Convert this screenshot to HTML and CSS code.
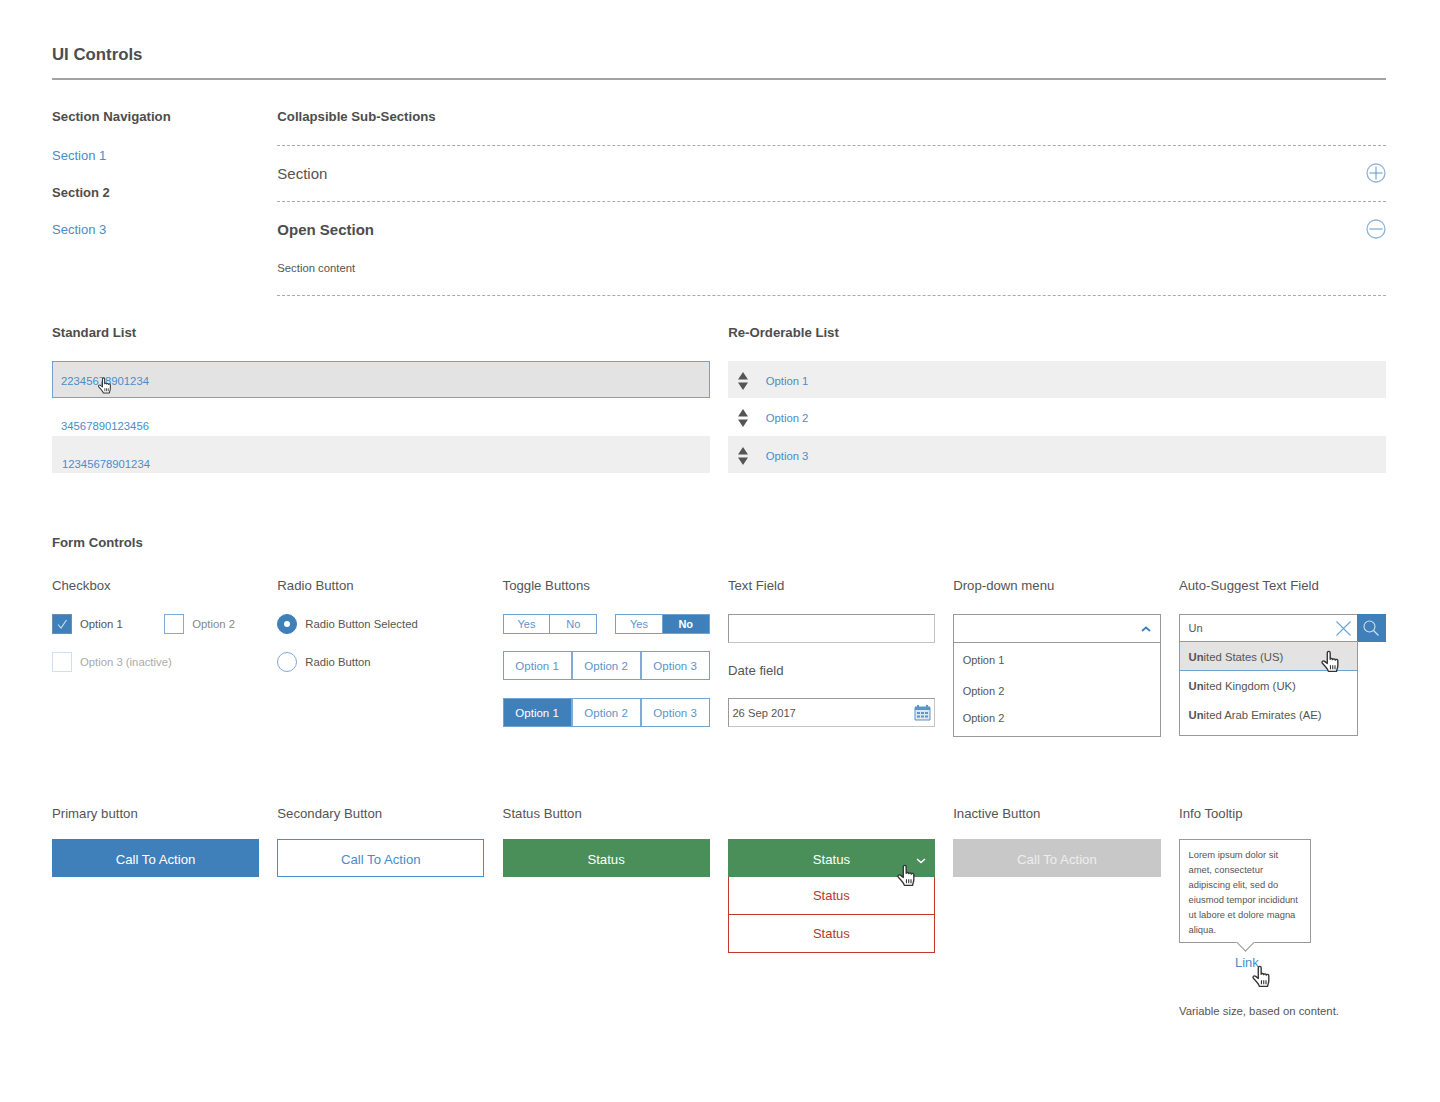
FILE: index.html
```html
<!DOCTYPE html>
<html>
<head>
	<meta charset="utf-8">
	<title>UI Controls</title>
	<link rel="stylesheet" href="styles.css">
</head>
<body>
	<svg class="defs" width="0" height="0">
		<symbol id="hand" viewBox="0 0 22 25">
			<path d="M8 3a1.6 1.6 0 0 1 3.2 0v7a1.5 1.5 0 0 1 2.8.4 1.5 1.5 0 0 1 2.8.5 1.5 1.5 0 0 1 2.8.9V17c0 2.4-1 3.6-1.4 6.4H9.2C8.4 20.6 5.4 17.4 2.8 14.8 1.2 13 3 10.800 5.2 12.400L8 14.600Z" fill="#fff" stroke="#333" stroke-width="1.5" stroke-linejoin="round"/>
			<path d="M11.5 16.500v4.500M14 16.500v4.500M16.500 16.500v4.500" fill="none" stroke="#333" stroke-width="1.2"/>
		</symbol>
	</svg>

	<div class="main">
		<h1>UI Controls</h1>

		<div class="grid top-box">
			<div>
				<h4>Section Navigation</h4>
				<ul class="nav-list">
					<li><a>Section 1</a></li>
					<li class="current">Section 2</li>
					<li><a>Section 3</a></li>
				</ul>
			</div>
			<div class="span-5">
				<h4 class="sub-title">Collapsible Sub-Sections</h4>
				<div class="sub-section">
					<div class="sub-head">
						<span>Section</span>
						<svg width="20" height="20" viewBox="0 0 20 20"><circle cx="10" cy="10" r="9" fill="none" stroke="#8db4d9" stroke-width="1.3"/><path d="M10 3.500v13M3.500 10h13" stroke="#5b95cb" stroke-width="1"/></svg>
					</div>
				</div>
				<div class="sub-section">
					<div class="sub-head open">
						<span>Open Section</span>
						<svg width="20" height="20" viewBox="0 0 20 20"><circle cx="10" cy="10" r="9" fill="none" stroke="#8db4d9" stroke-width="1.3"/><path d="M3.500 10h13" stroke="#5b95cb" stroke-width="1"/></svg>
					</div>
					<p class="sub-content">Section content</p>
				</div>
			</div>
		</div>

		<div class="list-wrap">
			<div>
				<h4 class="list-title">Standard List</h4>
				<div class="std-list">
					<div class="std-row selected">
						<a>22345678901234</a>
						<svg class="hand hand-list"><use href="#hand"/></svg>
					</div>
					<div class="std-row middle"><a>34567890123456</a></div>
					<div class="std-row grey last"><a class="nudge">12345678901234</a></div>
				</div>
			</div>
			<div>
				<h4 class="list-title">Re-Orderable List</h4>
				<div class="re-list">
					<div class="re-row grey">
						<svg width="10" height="18" viewBox="0 0 10 18"><path d="M5 0l5 7.500H0zM0 10.500h10L5 18z" fill="#555"/></svg>
						<a>Option 1</a>
					</div>
					<div class="re-row middle">
						<svg width="10" height="18" viewBox="0 0 10 18"><path d="M5 0l5 7.500H0zM0 10.500h10L5 18z" fill="#555"/></svg>
						<a>Option 2</a>
					</div>
					<div class="re-row grey">
						<svg width="10" height="18" viewBox="0 0 10 18"><path d="M5 0l5 7.500H0zM0 10.500h10L5 18z" fill="#555"/></svg>
						<a>Option 3</a>
					</div>
				</div>
			</div>
		</div>

		<h4 class="form-title">Form Controls</h4>

		<div class="grid">
			<div>
				<div class="field-label">Checkbox</div>
				<div class="check-row">
					<span class="check on"><svg width="18" height="18" viewBox="0 0 18 18"><path d="M5 9.500l3 3.500 5.500-8" fill="none" stroke="#cfe0f0" stroke-width="1.1"/></svg></span>
					<span class="check-text">Option 1</span>
					<span class="check second"></span>
					<span class="check-text light">Option 2</span>
				</div>
				<div class="check-row">
					<span class="check off"></span>
					<span class="check-text lighter">Option 3 (inactive)</span>
				</div>
			</div>
			<div>
				<div class="field-label">Radio Button</div>
				<div class="check-row">
					<span class="radio on"></span>
					<span class="check-text">Radio Button Selected</span>
				</div>
				<div class="check-row">
					<span class="radio"></span>
					<span class="check-text">Radio Button</span>
				</div>
			</div>
			<div>
				<div class="field-label">Toggle Buttons</div>
				<div class="toggle-small">
					<div class="toggle">
						<span>Yes</span><span>No</span>
					</div>
					<div class="toggle">
						<span>Yes</span><span class="active">No</span>
					</div>
				</div>
				<div class="toggle big">
					<span>Option 1</span><span>Option 2</span><span>Option 3</span>
				</div>
				<div class="toggle big">
					<span class="active">Option 1</span><span>Option 2</span><span>Option 3</span>
				</div>
			</div>
			<div>
				<div class="field-label">Text Field</div>
				<div class="text-field"></div>
				<div class="field-label date-label">Date field</div>
				<div class="text-field date">
					<span>26 Sep 2017</span>
					<svg width="17" height="17" viewBox="0 0 17 17">
						<path d="M1 3.500h15V16H1z" fill="#dbe8f4" stroke="#5b95cb"/>
						<path d="M1 2.500h15V6H1z" fill="#5b95cb"/>
						<path d="M4 1v3M13 1v3" stroke="#5b95cb" stroke-width="2"/>
						<path d="M3 8h3v2H3zM7 8h3v2H7zM11 8h3v2h-3zM3 11.500h3v2H3zM7 11.500h3v2H7zM11 11.500h3v2h-3z" fill="#5b95cb"/>
					</svg>
				</div>
			</div>
			<div>
				<div class="field-label">Drop-down menu</div>
				<div class="drop-box">
					<div class="drop-head">
						<svg width="10" height="6" viewBox="0 0 10 6"><path d="M1 5l4-3.500L9 5" fill="none" stroke="#3f7fba" stroke-width="1.8"/></svg>
					</div>
					<div class="drop-item first">Option 1</div>
					<div class="drop-item second">Option 2</div>
					<div class="drop-item third">Option 2</div>
				</div>
			</div>
			<div>
				<div class="field-label">Auto-Suggest Text Field</div>
				<div class="suggest-head">
					<div class="suggest-input">
						<span>Un</span>
						<svg width="17" height="17" viewBox="0 0 17 17"><path d="M1.500 1.500l14 14M15.500 1.500l-14 14" stroke="#6ea3d2" stroke-width="1.1"/></svg>
					</div>
					<div class="suggest-btn">
						<svg width="18" height="18" viewBox="0 0 18 18"><circle cx="7.500" cy="7.500" r="5.500" fill="none" stroke="#cfe0f0" stroke-width="1.1"/><path d="M11.500 11.500l5 5" stroke="#cfe0f0" stroke-width="1.2"/></svg>
					</div>
				</div>
				<div class="suggest-list">
					<div class="suggest-item selected"><b>Un</b>ited States (US)
						<svg class="hand hand-suggest"><use href="#hand"/></svg>
					</div>
					<div class="suggest-item"><b>Un</b>ited Kingdom (UK)</div>
					<div class="suggest-item"><b>Un</b>ited Arab Emirates (AE)</div>
				</div>
			</div>
		</div>

		<div class="grid button-box">
			<div>
				<div class="field-label">Primary button</div>
				<div class="btn primary">Call To Action</div>
			</div>
			<div>
				<div class="field-label">Secondary Button</div>
				<div class="btn secondary">Call To Action</div>
			</div>
			<div>
				<div class="field-label">Status Button</div>
				<div class="btn status">Status</div>
			</div>
			<div>
				<div class="field-label">&nbsp;</div>
				<div class="btn status split">
					Status
					<svg class="split-arrow" width="10" height="6" viewBox="0 0 10 6"><path d="M1 1l4 3.500L9 1" fill="none" stroke="#fff" stroke-width="1.5"/></svg>
					<svg class="hand hand-status"><use href="#hand"/></svg>
				</div>
				<div class="status-item">Status</div>
				<div class="status-item">Status</div>
			</div>
			<div>
				<div class="field-label">Inactive Button</div>
				<div class="btn inactive">Call To Action</div>
			</div>
			<div>
				<div class="field-label">Info Tooltip</div>
				<div class="tooltip">Lorem ipsum dolor sit amet, consectetur adipiscing elit, sed do eiusmod tempor incididunt ut labore et dolore magna aliqua.</div>
				<div class="tip-link">
					<a>Link</a>
					<svg class="hand hand-link"><use href="#hand"/></svg>
				</div>
				<p class="tip-note">Variable size, based on content.</p>
			</div>
		</div>
	</div>
</body>
</html>
```

FILE: styles.css
```css
* {
	margin: 0;
	padding: 0;
	box-sizing: border-box;
}
body {
	font-family: "Liberation Sans", Arial, sans-serif;
	color: #555;
	background: #fff;
}
a {
	color: #4a8cc9;
}
.defs {
	position: absolute;
}
.main {
	margin-left: 52px;
	width: 1334px;
	height: 1102px;
}
h1 {
	padding-top: 45px;
	height: 80px;
	border-bottom: 2px solid #a3a3a3;
	font-size: 16.8px;
	line-height: 20px;
	color: #4d4d4d;
}
h4 {
	font-size: 13.2px;
	line-height: 20px;
	color: #4d4d4d;
}
.grid {
	display: grid;
	grid-template-columns: 207px 207px 207px 207px 207.5px 207px;
	column-gap: 18.3px;
	align-items: start;
}
.span-5 {
	grid-column: span 5;
}

.top-box {
	margin-top: 27px;
}
.nav-list {
	margin-top: 10px;
	list-style: none;
	font-size: 13px;
}
.nav-list li {
	height: 37px;
	line-height: 37px;
}
.nav-list .current {
	font-weight: bold;
	color: #4d4d4d;
}
.sub-title {
	margin-bottom: 18px;
}
.sub-section {
	border-bottom: 1px dashed #aaa;
}
.sub-section:first-of-type {
	border-top: 1px dashed #aaa;
}
.sub-head {
	display: flex;
	justify-content: space-between;
	align-items: center;
	padding-bottom: 1px;
	height: 55px;
	font-size: 15px;
}
.sub-head.open {
	font-weight: bold;
	color: #4d4d4d;
}
.sub-content {
	padding: 1px 0 17px;
	font-size: 11.3px;
	line-height: 20px;
}

.list-wrap {
	display: grid;
	grid-template-columns: 657.8px 657.8px;
	column-gap: 18.4px;
	margin-top: 27px;
}
.list-title {
	margin-bottom: 18px;
}
.std-row {
	display: flex;
	position: relative;
	align-items: flex-end;
	padding: 0 0 2px 9px;
	height: 37px;
	font-size: 11.3px;
	line-height: 14px;
}
.std-row.middle {
	padding-bottom: 3px;
	height: 38px;
}
.std-row.selected {
	align-items: center;
	padding: 2px 0 0 8px;
	border: 1px solid #6ea3d2;
	background: #e3e3e3;
}
.grey {
	background: #efefef;
}
.nudge {
	margin-left: 1px;
}
.re-row {
	display: flex;
	align-items: center;
	padding: 1px 0 0 10px;
	height: 37px;
	font-size: 11.3px;
}
.re-row.grey {
	padding-top: 2px;
}
.re-row.middle {
	height: 38px;
}
.re-row a {
	margin-left: 17.5px;
}

.form-title {
	margin: 60px 0 23px;
}
.field-label {
	margin-bottom: 18px;
	font-size: 13.2px;
	line-height: 20px;
}
.check-row {
	display: flex;
	align-items: center;
	margin-bottom: 17.5px;
	height: 20px;
	font-size: 11.3px;
}
.check {
	display: block;
	flex: none;
	width: 20px;
	height: 20px;
	border: 1px solid #7fabd6;
}
.check.on {
	border-color: #6b8fb0;
	background: #3f7fba;
}
.check.second {
	margin-left: 41.5px;
}
.check.off {
	border-color: #cfe0f0;
}
.check-text {
	margin-left: 8px;
}
.light {
	color: #888;
}
.lighter {
	color: #aaa;
}
.radio {
	flex: none;
	position: relative;
	width: 20px;
	height: 20px;
	border: 1px solid #7fabd6;
	border-radius: 50%;
}
.radio.on {
	border-color: #3f7fba;
	background: #3f7fba;
}
.radio.on::after {
	content: "";
	position: absolute;
	top: 6px;
	left: 6px;
	width: 6px;
	height: 6px;
	border-radius: 50%;
	background: #fff;
}

.toggle-small {
	display: flex;
	justify-content: space-between;
	margin-bottom: 17px;
}
.toggle-small .toggle {
	width: 94.5px;
}
.toggle {
	display: flex;
	height: 20px;
	border: 1px solid #6ea3d2;
	font-size: 11px;
	line-height: 18px;
	color: #5b95cb;
}
.toggle span {
	flex: 1;
	text-align: center;
	border-left: 1px solid #6ea3d2;
}
.toggle span:first-child {
	border-left: 0;
}
.toggle .active {
	background: #3f7fba;
	color: #fff;
	font-weight: bold;
}
.toggle.big {
	margin-bottom: 18px;
	height: 29px;
	font-size: 11.5px;
	line-height: 29px;
}
.toggle.big span {
	border-left-width: 2px;
	border-left-color: #7fabd6;
}
.toggle.big .active {
	font-weight: normal;
}

.text-field {
	height: 29px;
	border: 1px solid #999;
	border-right-color: #c4c4c4;
	border-bottom-color: #c4c4c4;
}
.date-label {
	margin: 18px 0 17px;
}
.text-field.date {
	display: flex;
	justify-content: space-between;
	align-items: center;
	padding: 0 3px 0 3.5px;
	font-size: 11.2px;
}

.drop-box {
	height: 123px;
	border: 1px solid #999;
	font-size: 11px;
}
.drop-head {
	display: flex;
	justify-content: flex-end;
	align-items: center;
	padding-right: 9px;
	height: 28px;
	border-bottom: 1px solid #999;
}
.drop-item {
	padding-left: 8.5px;
	line-height: 20px;
}
.drop-item.first {
	margin-top: 7px;
}
.drop-item.second {
	margin-top: 11px;
}
.drop-item.third {
	margin-top: 7px;
}

.suggest-head {
	display: flex;
	height: 28px;
}
.suggest-input {
	display: flex;
	justify-content: space-between;
	align-items: center;
	padding: 0 5px 0 8.5px;
	width: 178px;
	border: 1px solid #999;
	border-right: 0;
	font-size: 11px;
}
.suggest-btn {
	display: flex;
	justify-content: center;
	align-items: center;
	width: 29px;
	background: #3f7fba;
}
.suggest-list {
	width: 179px;
	height: 95px;
	border: 1px solid #999;
	border-top: 0;
	font-size: 11.3px;
}
.suggest-item {
	padding-left: 8.5px;
	height: 28.5px;
	line-height: 30px;
}
.suggest-item.selected {
	position: relative;
	margin: -1px -1px 0;
	padding-left: 8.5px;
	height: 30px;
	line-height: 31px;
	border: 1px solid #6ea3d2;
	background: #e3e3e3;
}

.button-box {
	margin-top: 59px;
}
.button-box .field-label {
	margin-bottom: 15px;
}
.btn {
	position: relative;
	height: 38px;
	text-align: center;
	font-size: 13.2px;
	line-height: 42px;
}
.primary {
	background: #3f7fba;
	color: #fff;
}
.secondary {
	border: 1px solid #4a8cc9;
	line-height: 40px;
	color: #4a8cc9;
}
.status {
	background: #4a8f5a;
	color: #fff;
}
.inactive {
	background: #c8c8c8;
	color: #eee;
}
.split-arrow {
	position: absolute;
	top: 19px;
	right: 9px;
}
.status-item {
	height: 37.5px;
	border: 1px solid #c0392b;
	border-top: 0;
	text-align: center;
	font-size: 13px;
	line-height: 38px;
	color: #b8392b;
}
.status-item:last-child {
	height: 38px;
}

.tooltip {
	position: relative;
	padding: 7px 8.5px 5px;
	width: 132px;
	height: 104px;
	border: 1px solid #999;
	font-size: 9.4px;
	line-height: 15px;
}
.tooltip::after {
	content: "";
	position: absolute;
	left: 59px;
	bottom: -7px;
	width: 12px;
	height: 12px;
	border-right: 1px solid #999;
	border-bottom: 1px solid #999;
	background: #fff;
	transform: rotate(45deg);
}
.tip-link {
	position: relative;
	margin-top: 11px;
	padding-left: 56px;
	font-size: 13px;
	line-height: 18px;
}
.tip-note {
	margin-top: 31px;
	font-size: 11.3px;
	line-height: 16px;
}

.hand {
	position: absolute;
	width: 20px;
	height: 23px;
}
.hand-list {
	top: 15px;
	left: 44px;
	width: 15px;
	height: 17px;
}
.hand-suggest {
	top: 8px;
	left: 140px;
}
.hand-status {
	top: 25px;
	left: 168px;
}
.hand-link {
	top: 11px;
	left: 72px;
}
```
